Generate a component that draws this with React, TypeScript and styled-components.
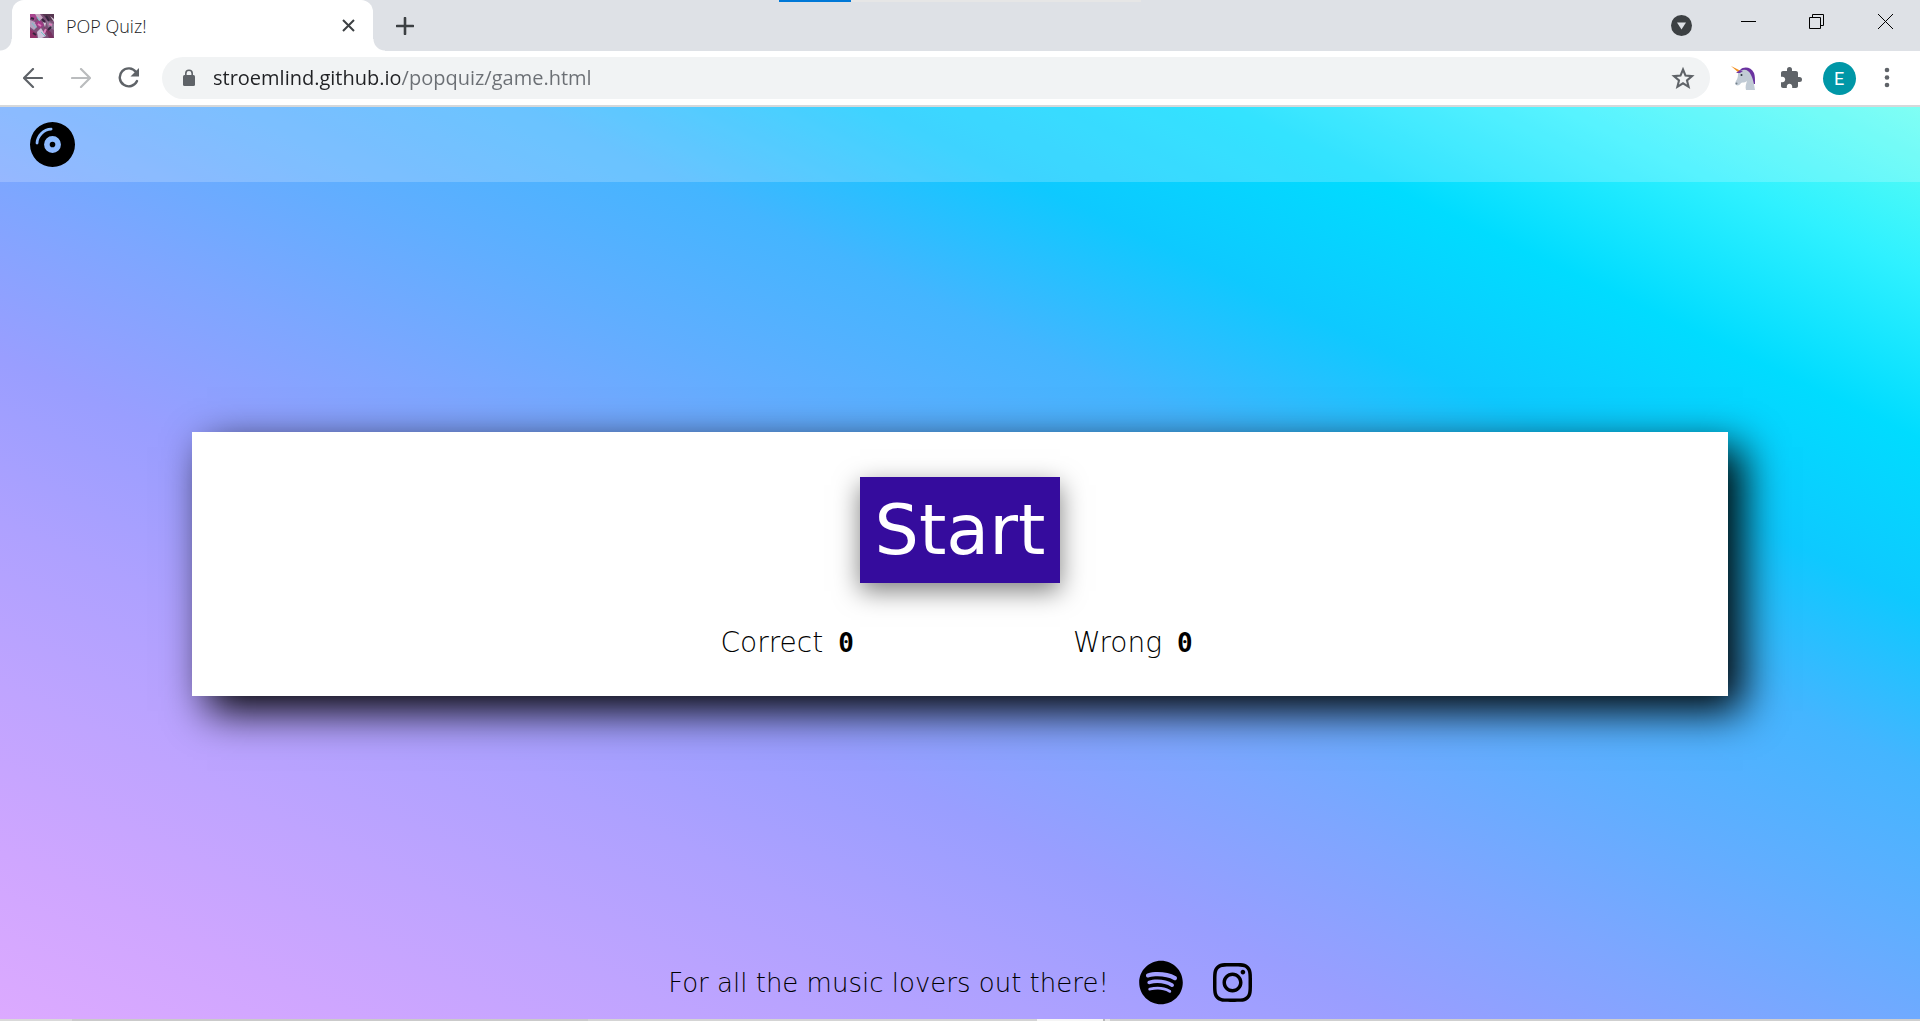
import React from "react";
import styled, { createGlobalStyle } from "styled-components";
import { FaCompactDisc, FaInstagram, FaSpotify } from "react-icons/fa6";
import { MdExtension } from "react-icons/md";

const GlobalStyle = createGlobalStyle`
  *, *::before, *::after { box-sizing: border-box; }
  body { margin: 0; background: #fff; }
  button { margin: 0; padding: 0; border: 0; background: none; font: inherit; color: inherit; cursor: pointer; }
  svg { display: block; }
`;

const uiFont = `"Open Sans", "Noto Sans", sans-serif`;
const displayFont = `"DejaVu Sans", sans-serif`;

const Screen = styled.div`
  display: flex;
  flex-direction: column;
  min-height: 100vh;
`;

/* Browser chrome */

const TabStrip = styled.div`
  position: relative;
  display: flex;
  height: 51px;
  padding-left: 12px;
  background: #dee1e6;
  font-family: ${uiFont};
`;

const CaptureBar = styled.div`
  position: absolute;
  top: 0;
  left: 779px;
  width: 362px;
  height: 2px;
  background: linear-gradient(to right, #0078d7 72px, #e6e6e6 72px);
`;

const Tab = styled.div`
  position: relative;
  display: flex;
  align-items: center;
  width: 361px;
  padding: 0 15px 0 18px;
  border-radius: 12px 12px 0 0;
  background: #fff;

  &::before,
  &::after {
    content: "";
    position: absolute;
    bottom: 0;
    width: 12px;
    height: 12px;
  }
  &::before {
    left: -12px;
    background: radial-gradient(circle at 0 0, transparent 11px, #fff 12px);
  }
  &::after {
    right: -12px;
    background: radial-gradient(circle at 100% 0, transparent 11px, #fff 12px);
  }
`;

const TabTitle = styled.span`
  flex: 1;
  margin-left: 12px;
  font-size: 18px;
  font-weight: 300;
  line-height: 20px;
  color: #202124;
`;

const IconButton = styled.button<{ $width: number; $color?: string }>`
  display: flex;
  flex: none;
  align-items: center;
  justify-content: center;
  width: ${(p) => p.$width}px;
  color: ${(p) => p.$color ?? "#5f6368"};
`;

const WindowControls = styled.div`
  display: flex;
  margin-left: auto;
`;

const CaptionButton = styled(IconButton)`
  height: 43px;
  color: #000;
`;

const Toolbar = styled.div`
  display: flex;
  align-items: stretch;
  height: 56px;
  padding: 6px 9px;
  border-bottom: 2px solid #d6d8da;
  background: #fff;
  font-family: ${uiFont};
`;

const AddressBar = styled.label`
  display: flex;
  flex: 1;
  align-items: center;
  height: 42px;
  margin: 0 9px;
  padding: 0 15px 0 17px;
  border-radius: 21px;
  background: #f1f3f4;
  color: #5f6368;
`;

const AddressInput = styled.input`
  flex: 1;
  min-width: 0;
  height: 32px;
  margin-left: 14px;
  padding: 0;
  border: 0;
  outline: 0;
  background: linear-gradient(to right, #202124 187px, #6b6f74 187px);
  -webkit-background-clip: text;
  background-clip: text;
  color: transparent;
  font-family: ${uiFont};
  font-size: 20px;
  line-height: 32px;
`;

const Avatar = styled.span`
  display: flex;
  align-items: center;
  justify-content: center;
  width: 33px;
  height: 33px;
  border-radius: 50%;
  background: #0097a7;
  color: #fff;
  font-family: Roboto, sans-serif;
  font-size: 18px;
`;

/* Quiz page */

const Page = styled.div`
  display: flex;
  flex: 1;
  flex-direction: column;
  background: linear-gradient(
    to right top,
    #dcaaff,
    #cfa6ff,
    #bfa4ff,
    #aea1ff,
    #999eff,
    #7ea6ff,
    #60aeff,
    #44b5ff,
    #0ec9ff,
    #00dcff,
    #2ff1ff,
    #60fff2
  );
  color: #000;
  font-family: ${displayFont};
`;

const PageHeader = styled.header`
  display: flex;
  align-items: center;
  height: 75px;
  padding: 0 30px;
  background: rgba(255, 255, 255, 0.2);
`;

const IconLink = styled.a<{ $width: number }>`
  display: block;
  color: inherit;

  svg {
    width: ${(p) => p.$width}px;
    height: 45px;
  }
`;

const Main = styled.main`
  display: flex;
  flex: 1;
  align-items: center;
  justify-content: center;
`;

const Card = styled.section`
  display: flex;
  flex-direction: column;
  align-items: center;
  gap: 43px;
  width: 80%;
  padding: 45px 0 36px;
  background: #fff;
  box-shadow: 15px 15px 40px #000;
`;

const StartButton = styled.button`
  min-width: 200px;
  padding: 16px 12px;
  background: #350c9d;
  color: #fff;
  font-size: 70px;
  line-height: 74px;
  box-shadow: 0 8px 24px rgba(0, 0, 0, 0.5);
`;

const Scores = styled.div`
  display: grid;
  grid-template-columns: 1fr 1fr;
  justify-items: center;
  width: 45%;
`;

const Score = styled.p`
  display: flex;
  align-items: baseline;
  gap: 15px;
  margin: 0;
  font-size: 28px;
  font-weight: 200;
  line-height: 34px;
`;

const ScoreValue = styled.span`
  font-family: "DejaVu Sans Mono", monospace;
  font-size: 26px;
  font-weight: 700;
`;

const PageFooter = styled.footer`
  display: flex;
  align-items: center;
  justify-content: center;
  gap: 30px;
  height: 73px;
`;

const Tagline = styled.p`
  margin: 0;
  font-size: 26px;
  font-weight: 200;
  line-height: 34px;
`;

const TaskbarEdge = styled.div`
  height: 2px;
  background: linear-gradient(
    to right,
    #d9d9d9 72px,
    #cacaca 72px 588px,
    #d4d4d4 588px 1037px,
    #f5f5f5 1037px 1103px,
    #b8b8b8 1103px 1105px,
    #e6e6e6 1105px 1110px,
    #cfcfcf 1110px
  );
`;

const Favicon = () => (
  <svg width="24" height="24" viewBox="0 0 24 24" aria-hidden="true">
    <rect width="24" height="24" fill="#7d5078" />
    <path d="M0 0h5l2 4-3 3-4-3z" fill="#a8458f" />
    <path d="M5 0h5l3 4-4 3z" fill="#c9a9c4" />
    <path d="M12 0h12v7l-6-1z" fill="#563650" />
    <path d="M0 6l5 2 2 5-3 3-4-3z" fill="#b7a2bf" />
    <path d="M5 9l5-3 4 5-4 4z" fill="#a03a86" />
    <path d="M16 6l8 4v6l-6-3z" fill="#8f7895" />
    <path d="M0 15l6 4 1 5H0z" fill="#93306a" />
    <path d="M7 18l4-4 5 8-4 2H8z" fill="#cfc3da" />
    <path d="M14 13l7 5 3 6h-5z" fill="#76315f" />
    <path d="M20 2l4 3v3zM13 8l3 1-1 4z" fill="#d6c9d8" />
    <path d="M2 9l4 5M7 3l3 4M11 18l4 4" stroke="#6fc6cc" />
    <path d="M16 2l3 5M3 19l3 2M18 16l3-3M12 5l3 3M1 4l3 1" stroke="#35243d" strokeWidth="2" />
    <path d="M8 10l3 2M14 19l2-4M19 10l3 1" stroke="#e07dbb" strokeWidth="2" />
  </svg>
);

const Cross = ({ size, stroke }: { size: number; stroke: number }) => (
  <svg width={size} height={size} viewBox={`0 0 ${size} ${size}`} aria-hidden="true">
    <path
      d={`M1 1L${size - 1} ${size - 1}M${size - 1} 1L1 ${size - 1}`}
      stroke="currentColor"
      strokeWidth={stroke}
    />
  </svg>
);

const Plus = () => (
  <svg width="18" height="18" viewBox="0 0 18 18" aria-hidden="true">
    <path d="M9 1v16M1 9h16" stroke="currentColor" strokeWidth="2.6" strokeLinecap="round" />
  </svg>
);

const Arrow = ({ flip }: { flip?: boolean }) => (
  <svg width="20" height="20" viewBox="0 0 20 20" aria-hidden="true">
    <path
      d={flip ? "M1 10h18M10 1l9 9-9 9" : "M19 10H1M10 1L1 10l9 9"}
      fill="none"
      stroke="currentColor"
      strokeWidth="2.2"
      strokeLinecap="round"
      strokeLinejoin="round"
    />
  </svg>
);

const Reload = () => (
  <svg width="22" height="22" viewBox="0 0 22 22" aria-hidden="true">
    <path
      d="M18 5A9 9 0 1 0 19 14"
      fill="none"
      stroke="currentColor"
      strokeWidth="2.4"
      strokeLinecap="round"
    />
    <path d="M21 1v8.500h-8.500z" fill="currentColor" />
  </svg>
);

const Lock = () => (
  <svg width="20" height="18" viewBox="0 0 20 18" aria-hidden="true">
    <rect x="4" y="6" width="12" height="11" rx="1.5" fill="currentColor" />
    <path d="M6.800 7V4.500a3.200 3.200 0 0 1 6.400 0V7" fill="none" stroke="currentColor" strokeWidth="1.6" />
  </svg>
);

const Star = () => (
  <svg width="24" height="24" viewBox="0 0 24 24" aria-hidden="true">
    <path
      d="M12 3.500l2.500 6.100 6.500.5-5 4.300 1.600 6.400-5.600-3.500-5.600 3.500L8 14.400l-5-4.300 6.500-.5z"
      fill="none"
      stroke="currentColor"
      strokeWidth="2.1"
    />
  </svg>
);

const TabSearch = () => (
  <svg width="21" height="21" viewBox="0 0 21 21" aria-hidden="true">
    <circle cx="10.5" cy="10.5" r="10.5" fill="#3c4043" />
    <path d="M6 7.500h9l-4.500 7z" fill="#dee1e6" />
  </svg>
);

const Minimise = () => (
  <svg width="15" height="15" viewBox="0 0 15 15" aria-hidden="true">
    <path d="M0 7.500h15" stroke="currentColor" />
  </svg>
);

const Restore = () => (
  <svg width="16" height="15" viewBox="0 0 16 15" aria-hidden="true">
    <path d="M.5 3.500h11v11h-11zM3.500 3.500v-3h11v11h-3" fill="none" stroke="currentColor" />
  </svg>
);

const Unicorn = () => (
  <svg width="24" height="24" viewBox="0 0 24 24" aria-hidden="true">
    <path d="M9 4c4-4 11-3 14 3 1 3 1 6 1 11h-3C21 11 18 6 9 4z" fill="#6a32a0" />
    <path
      d="M7 6c6-4 11-2 13 3 2 4 3 8 4 15h-9c-1-3 0-6 1-9-2 2-4 1-6 2-1 2-3 3-5 2-1-1-1-2 0-4 2-3 2-5 2-9z"
      fill="#c1cbd5"
    />
    <path d="M0 0l10 5-2 2z" fill="#f4901e" />
    <path d="M5 7l4-3 3 1-3 2z" fill="#7138a5" />
    <circle cx="10.5" cy="9" r="1" fill="#29353d" />
    <circle cx="5.500" cy="17.500" r="1" fill="#73808a" />
  </svg>
);

const Kebab = () => (
  <svg width="6" height="22" viewBox="0 0 6 22" fill="currentColor" aria-hidden="true">
    <circle cx="3" cy="3" r="2.3" />
    <circle cx="3" cy="10.500" r="2.3" />
    <circle cx="3" cy="18" r="2.3" />
  </svg>
);

export default function App() {
  return (
    <Screen>
      <GlobalStyle />

      <TabStrip>
        <CaptureBar />
        <Tab>
          <Favicon />
          <TabTitle>POP Quiz!</TabTitle>
          <IconButton $width={20} $color="#3c4043" aria-label="Close tab">
            <Cross size={13} stroke={2} />
          </IconButton>
        </Tab>
        <IconButton $width={64} $color="#3c4043" aria-label="New tab">
          <Plus />
        </IconButton>
        <WindowControls>
          <IconButton $width={66} aria-label="Search tabs">
            <TabSearch />
          </IconButton>
          <CaptionButton $width={69} aria-label="Minimise">
            <Minimise />
          </CaptionButton>
          <CaptionButton $width={68} aria-label="Restore">
            <Restore />
          </CaptionButton>
          <CaptionButton $width={69} aria-label="Close">
            <Cross size={17} stroke={1} />
          </CaptionButton>
        </WindowControls>
      </TabStrip>

      <Toolbar>
        <IconButton $width={48} aria-label="Back">
          <Arrow />
        </IconButton>
        <IconButton $width={48} $color="#babcbe" aria-label="Forward">
          <Arrow flip />
        </IconButton>
        <IconButton $width={48} aria-label="Reload">
          <Reload />
        </IconButton>
        <AddressBar>
          <Lock />
          <AddressInput
            type="text"
            aria-label="Address"
            spellCheck={false}
            defaultValue="stroemlind.github.io/popquiz/game.html"
          />
          <IconButton $width={24} aria-label="Bookmark this page">
            <Star />
          </IconButton>
        </AddressBar>
        <IconButton $width={48} aria-label="Unicorn extension">
          <Unicorn />
        </IconButton>
        <IconButton $width={48} aria-label="Extensions">
          <MdExtension size={24} />
        </IconButton>
        <IconButton $width={48} aria-label="Profile">
          <Avatar>E</Avatar>
        </IconButton>
        <IconButton $width={48} aria-label="Menu">
          <Kebab />
        </IconButton>
      </Toolbar>

      <Page>
        <PageHeader>
          <IconLink $width={45} href="#home" aria-label="Home">
            <FaCompactDisc />
          </IconLink>
        </PageHeader>

        <Main>
          <Card>
            <StartButton>Start</StartButton>
            <Scores>
              <Score>
                Correct <ScoreValue>0</ScoreValue>
              </Score>
              <Score>
                Wrong <ScoreValue>0</ScoreValue>
              </Score>
            </Scores>
          </Card>
        </Main>

        <PageFooter>
          <Tagline>For all the music lovers out there!</Tagline>
          <IconLink $width={44} href="#spotify" aria-label="Spotify">
            <FaSpotify />
          </IconLink>
          <IconLink $width={39} href="#instagram" aria-label="Instagram">
            <FaInstagram />
          </IconLink>
        </PageFooter>
      </Page>

      <TaskbarEdge />
    </Screen>
  );
}
